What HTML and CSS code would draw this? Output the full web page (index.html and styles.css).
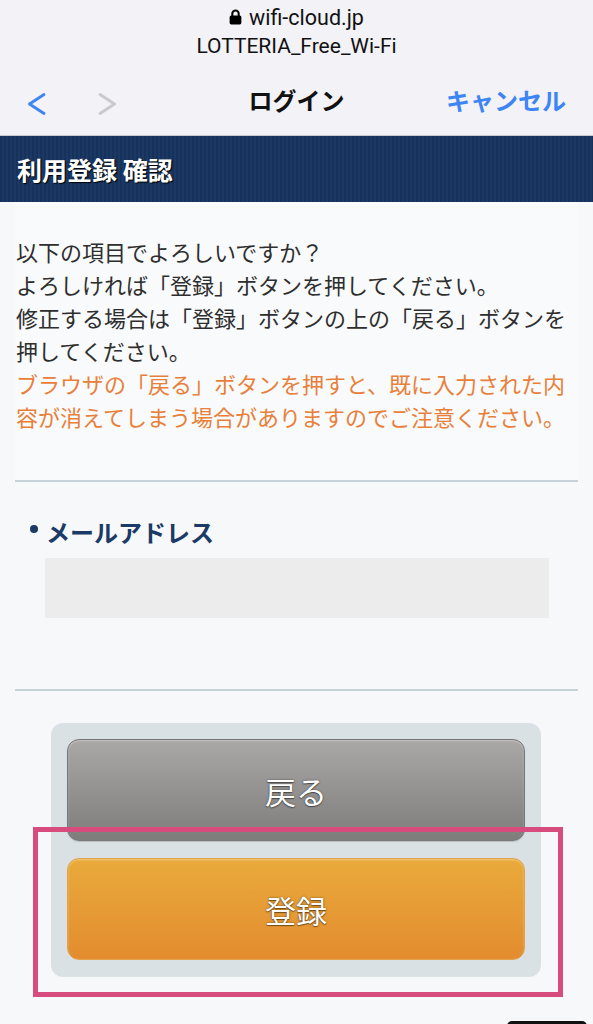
FILE: index.html
```html
<!DOCTYPE html>
<html lang="ja">
<head>
<meta charset="utf-8">
<title>ログイン</title>
<link rel="stylesheet" href="styles.css">
</head>
<body>
<div class="chrome">
  <div class="status">
    <div class="domain"><svg class="lock" viewBox="0 0 12 15" width="13" height="16"><path d="M3 6.5V4.5a3 3 0 0 1 6 0v2" fill="none" stroke="#000" stroke-width="1.9"/><rect x="0.5" y="6" width="11" height="8.5" rx="1.6" fill="#000"/></svg>wifi-cloud.jp</div>
    <div class="ssid">LOTTERIA_Free_Wi-Fi</div>
  </div>
  <div class="nav">
    <div class="nav-left">
      <svg class="chev" viewBox="0 0 19 22" width="19" height="22"><path d="M17 1.5 L2.5 11 L17 20.5" fill="none" stroke="#3d85f5" stroke-width="2.8" stroke-linecap="round" stroke-linejoin="round"/></svg>
      <svg class="chev fwd" viewBox="0 0 19 22" width="19" height="22"><path d="M2 1.5 L16.5 11 L2 20.5" fill="none" stroke="#c9c9ce" stroke-width="2.8" stroke-linecap="round" stroke-linejoin="round"/></svg>
    </div>
    <div class="nav-title">ログイン</div>
    <div class="nav-right">キャンセル</div>
  </div>
</div>

<div class="band">利用登録 確認</div>

<main class="main">
  <div class="intro">
    <p class="msg">以下の項目でよろしいですか？<br>よろしければ「登録」ボタンを押してください。<br>修正する場合は「登録」ボタンの上の「戻る」ボタンを押してください。</p>
    <p class="warn">ブラウザの「戻る」ボタンを押すと、既に入力された内容が消えてしまう場合がありますのでご注意ください。</p>
  </div>
  <div class="field-sec">
    <div class="label">メールアドレス</div>
    <div class="field"></div>
  </div>
  <div class="panel">
    <button class="btn back">戻る</button>
    <button class="btn submit">登録</button>
    <div class="highlight"></div>
  </div>
</main>
<div class="pill"></div>
</body>
</html>
```

FILE: styles.css
```css
html, body {
  margin: 0;
  padding: 0;
}
body {
  position: relative;
  width: 593px;
  min-height: 1024px;
  overflow: hidden;
  background: #f7f8fa;
  font-family: "Noto Sans CJK JP", "Noto Sans", sans-serif;
}

.chrome {
  background: #f2f2f7;
  height: 135px;
  border-bottom: 1px solid #c8c8cc;
  box-sizing: content-box;
}
.status {
  height: 62px;
  display: flex;
  flex-direction: column;
  align-items: center;
  font-family: Roboto, "Liberation Sans", sans-serif;
  color: #111;
}
.domain {
  height: 33px;
  line-height: 33px;
  font-size: 21.5px;
  display: flex;
  align-items: center;
  gap: 7px;
  padding-top: 1px;
}
.lock { position: relative; top: -1px; }
.ssid {
  height: 27px;
  line-height: 25px;
  font-size: 21px;
}
.nav {
  height: 73px;
  display: grid;
  grid-template-columns: 1fr auto 1fr;
  align-items: center;
  padding-top: 2px;
  box-sizing: border-box;
}
.nav-left {
  display: flex;
  align-items: center;
  padding-left: 27px;
  padding-top: 8px;
}
.chev.fwd { margin-left: 52px; }
.nav-title {
  font-size: 24px;
  font-weight: 700;
  color: #111;
}
.nav-right {
  justify-self: end;
  padding-right: 27px;
  font-size: 24px;
  font-weight: 700;
  color: #3d85f5;
}

.band {
  height: 66px;
  display: flex;
  align-items: center;
  padding-left: 17px;
  background: repeating-linear-gradient(90deg, #16315a 0 2px, #1b3964 2px 4px);
  color: #fff;
  font-size: 25px;
  font-weight: 700;
  text-shadow: 1px 1px 1px #000;
}

.main {
  padding: 0 15px 45px;
}
.intro {
  background: #f9fafb;
  padding: 33px 1px 47px;
  border-bottom: 2px solid #c6d2d7;
}
.intro p {
  margin: 0;
  font-size: 22px;
  line-height: 33px;
}
.msg { color: #2e2e2e; }
.warn { color: #e8803a; }

.field-sec {
  padding: 35px 0 71px;
  border-bottom: 2px solid #c6d2d7;
}
.label {
  display: flex;
  align-items: center;
  padding-left: 15px;
  font-size: 24px;
  line-height: 30px;
  font-weight: 700;
  color: #1b3a66;
}
.label::before {
  content: "";
  width: 8px;
  height: 8px;
  border-radius: 50%;
  background: #1b3a66;
  margin-right: 8px;
  position: relative;
  top: -3px;
}
.field {
  margin: 11px 0 0 30px;
  width: 504px;
  height: 60px;
  background: #ececec;
}

.panel {
  position: relative;
  margin: 32px 0 0 36px;
  width: 490px;
  box-sizing: border-box;
  padding: 16px 16px 17px;
  background: #dae1e5;
  border-radius: 12px;
  display: flex;
  flex-direction: column;
  gap: 17px;
}
.btn {
  width: 458px;
  height: 102px;
  border-radius: 12px;
  font-family: "Noto Sans CJK JP", sans-serif;
  font-size: 31px;
  color: #fff;
  text-shadow: 0 0 2px rgba(0,0,0,0.55), 0 1px 1px rgba(0,0,0,0.4);
  padding: 0;
  cursor: pointer;
}
.back {
  background: linear-gradient(#aaa8a6, #7e7d7b);
  border: 1px solid #777;
  box-shadow: inset 0 1px 2px rgba(255,255,255,0.35), 0 1px 1px rgba(0,0,0,0.15);
}
.submit {
  background: linear-gradient(#e9aa3b, #e38c2f);
  border: 1px solid #e3a24a;
  box-shadow: inset 0 1px 2px rgba(255,255,255,0.4);
}
.highlight {
  position: absolute;
  left: -18px;
  top: 104px;
  width: 530px;
  height: 170px;
  box-sizing: border-box;
  border: 5px solid #d84b7d;
  pointer-events: none;
}
.pill {
  position: absolute;
  left: 507px;
  top: 1021px;
  width: 80px;
  height: 10px;
  border-radius: 5px;
  background: #111;
}
```
